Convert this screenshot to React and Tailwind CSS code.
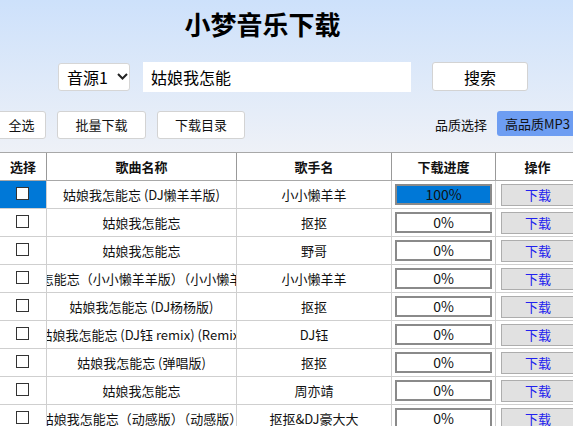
import React from "react";

const rows = [
  { name: "姑娘我怎能忘 (DJ懒羊羊版)", singer: "小小懒羊羊", p: 100 },
  { name: "姑娘我怎能忘", singer: "抠抠", p: 0 },
  { name: "姑娘我怎能忘", singer: "野哥", p: 0 },
  { name: "姑娘我怎能忘（小小懒羊羊版）（小小懒羊羊版）", singer: "小小懒羊羊", p: 0 },
  { name: "姑娘我怎能忘 (DJ杨杨版)", singer: "抠抠", p: 0 },
  { name: "姑娘我怎能忘 (DJ钰 remix) (Remix)", singer: "DJ钰", p: 0 },
  { name: "姑娘我怎能忘 (弹唱版)", singer: "抠抠", p: 0 },
  { name: "姑娘我怎能忘", singer: "周亦靖", p: 0 },
  { name: "姑娘我怎能忘（动感版）（动感版）", singer: "抠抠&DJ豪大大", p: 0 },
];

function Btn({ children, className = "" }) {
  return (
    <div
      className={
        "shrink-0 h-[28px] flex items-center justify-center bg-white border border-[#d3d3d3] rounded-[3px] text-[13px] text-[#111] " +
        className
      }
    >
      {children}
    </div>
  );
}

export default function App() {
  return (
    <div className="w-[573px] h-[426px] overflow-hidden bg-white font-['Noto_Sans_CJK_SC','Microsoft_YaHei',sans-serif] text-[#111]">
      <div className="h-[152px] bg-[linear-gradient(to_bottom,#cde1fb,#eef1f7)] flex flex-col">
        <div className="h-[48px] w-[525px] flex items-center justify-center">
          <span className="text-[26px] font-bold leading-none text-black">小梦音乐下载</span>
        </div>
        <div className="mt-[13px] h-[31px] flex items-center">
          <div className="ml-[58px] w-[72px] h-[28px] shrink-0 bg-white border border-[#d6d6d6] rounded-[3px] flex items-center pl-[8px] text-[16px] text-black">
            <span>音源1</span>
            <svg className="ml-[9px]" width="11" height="7" viewBox="0 0 11 7">
              <polyline points="1,1 5.5,5.5 10,1" fill="none" stroke="#222" strokeWidth="2" />
            </svg>
          </div>
          <div className="ml-[13px] w-[268px] h-[30px] shrink-0 bg-white flex items-center pl-[8px] text-[16px] text-black">
            姑娘我怎能
          </div>
          <div className="ml-[21px] w-[96px] h-[29px] shrink-0 bg-white border border-[#d3d3d3] rounded-[3px] flex items-center justify-center text-[16px] text-black">
            搜索
          </div>
        </div>
        <div className="mt-[19px] h-[28px] flex items-start">
          <Btn className="ml-[-3px] w-[49px]">全选</Btn>
          <Btn className="ml-[11px] w-[89px]">批量下载</Btn>
          <Btn className="ml-[11px] w-[88px]">下载目录</Btn>
          <span className="shrink-0 ml-[190px] h-[28px] flex items-center text-[13px]">品质选择</span>
          <div className="shrink-0 ml-[10px] w-[110px] h-[25px] bg-[#6d9df2] rounded-l-[3px] flex items-center pl-[8px] text-[13px] text-[#111]">
            高品质MP3
          </div>
        </div>
      </div>

      <div className="w-[640px] text-[13px]">
        <div className="flex h-[29px] border-t border-b border-[#a8a8a8] font-bold">
          <div className="w-[47px] shrink-0 border-r border-[#999] flex items-center justify-center">选择</div>
          <div className="w-[190px] shrink-0 border-r border-[#999] flex items-center justify-center">歌曲名称</div>
          <div className="w-[155px] shrink-0 border-r border-[#999] flex items-center justify-center">歌手名</div>
          <div className="w-[104px] shrink-0 border-r border-[#999] flex items-center justify-center">下载进度</div>
          <div className="w-[100px] shrink-0 flex items-center justify-center pr-[17px]">操作</div>
        </div>
        {rows.map((r, i) => (
          <div key={i} className="flex h-[28px] border-b border-[#cfcfcf]">
            <div
              className={
                "w-[47px] shrink-0 border-r border-[#cfcfcf] flex justify-center pt-[6px] pr-[1px] " +
                (i === 0 ? "bg-[#0078d7]" : "")
              }
            >
              <span className="w-[13px] h-[13px] bg-white border border-[#333]" />
            </div>
            <div className="w-[190px] shrink-0 border-r border-[#cfcfcf] flex items-center justify-center overflow-hidden whitespace-nowrap">
              <span className="shrink-0">{r.name}</span>
            </div>
            <div className="w-[155px] shrink-0 border-r border-[#cfcfcf] flex items-center justify-center overflow-hidden whitespace-nowrap">
              <span className="shrink-0">{r.singer}</span>
            </div>
            <div className="w-[104px] shrink-0 border-r border-[#cfcfcf] flex items-center pl-[3px]">
              <div className="relative w-[97px] h-[21px] border-2 border-[#8a8a8a] bg-white flex items-center justify-center text-[14px]">
                <div
                  className="absolute left-0 top-0 bottom-0 bg-[#0078d7]"
                  style={{ width: r.p + "%" }}
                />
                <span className="relative">{r.p}%</span>
              </div>
            </div>
            <div className="w-[100px] shrink-0 flex items-center pl-[5px]">
              <div className="w-[74px] h-[22px] bg-[#e1e1e1] border border-[#adadad] flex items-center justify-center text-[13px] text-[#2222ee]">
                下载
              </div>
            </div>
          </div>
        ))}
      </div>
    </div>
  );
}
